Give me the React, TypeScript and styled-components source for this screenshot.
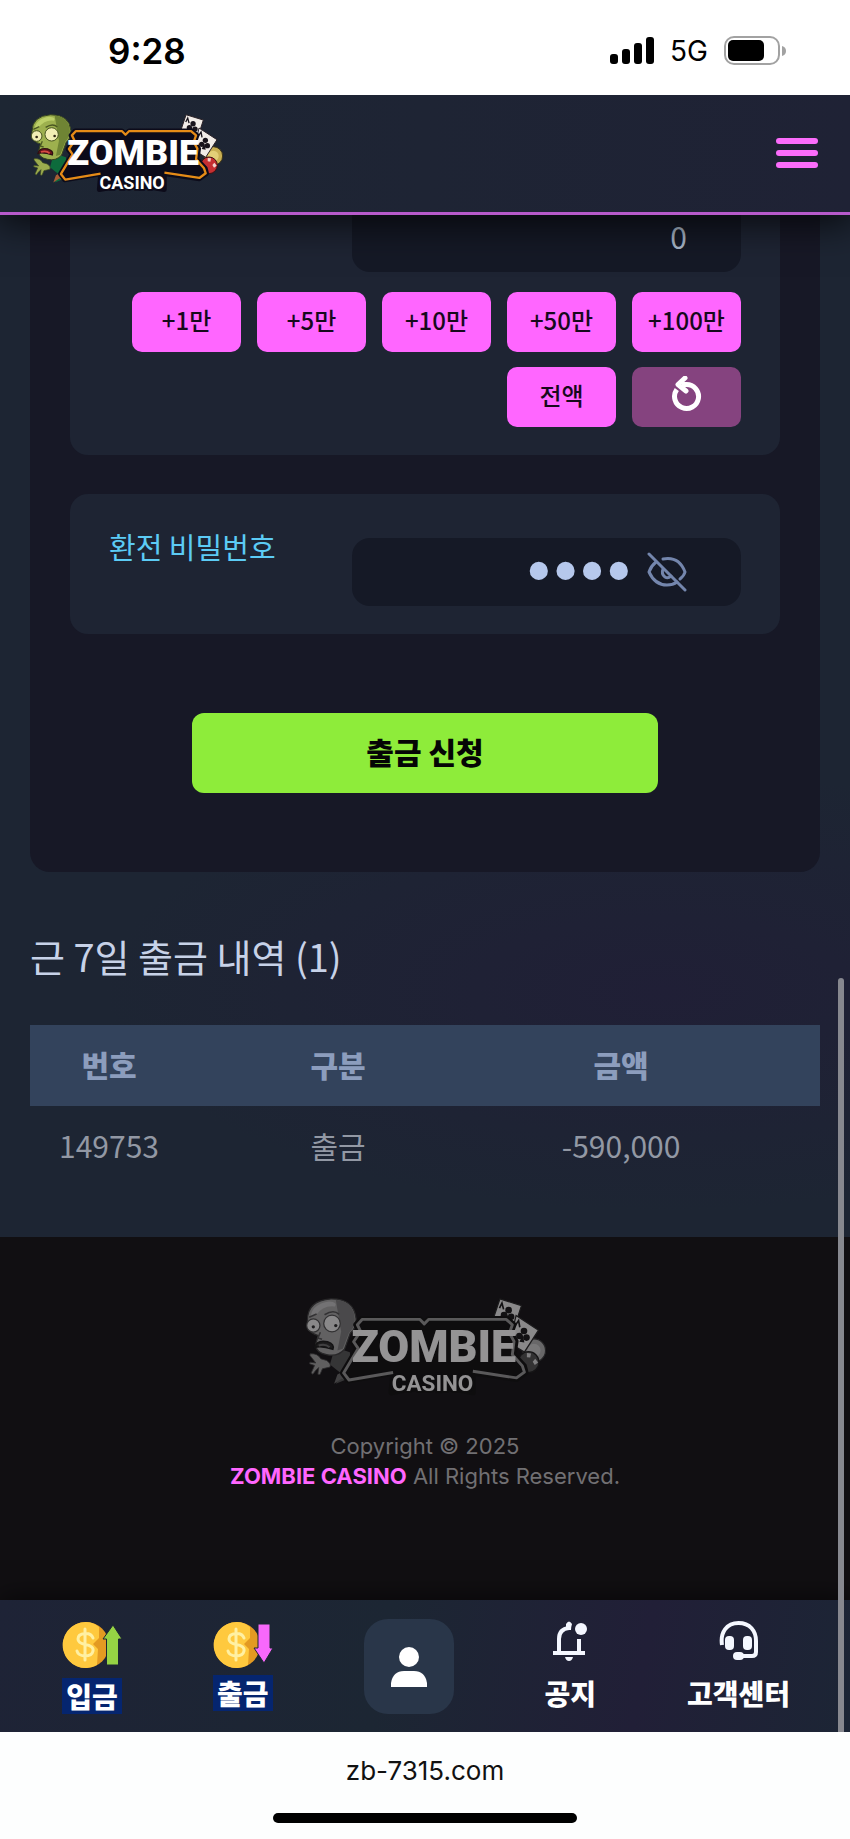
import React, { useState } from "react";
import styled, { createGlobalStyle, css } from "styled-components";

const GlobalStyle = createGlobalStyle`
  *, *::before, *::after { box-sizing: border-box; }
  body {
    margin: 0;
    background: #fdfefe;
    font-family: "Noto Sans CJK KR", sans-serif;
  }
  button, input { font-family: inherit; }
`;

const Page = styled.div`
  position: relative;
  display: flex;
  flex-direction: column;
  min-height: 100vh;
`;

const StatusBar = styled.div`
  position: relative;
  z-index: 2;
  display: flex;
  align-items: center;
  justify-content: space-between;
  height: 95px;
  padding: 6px 64px 0 108px;
  background: #ffffff;
  color: #000000;
  font-family: Inter, sans-serif;
`;

const Clock = styled.time`
  font-size: 35px;
  line-height: 40px;
  font-weight: 600;
`;

const StatusIcons = styled.div`
  display: flex;
  align-items: center;
  gap: 16px;
  font-size: 28px;
  line-height: 32px;
`;

const Header = styled.header`
  position: relative;
  z-index: 1;
  display: flex;
  align-items: center;
  justify-content: space-between;
  height: 120px;
  padding: 0 32px 0 30px;
  background: linear-gradient(90deg, #1d2633, #1f2235);
  border-bottom: 3px solid #b75acb;
  box-shadow: 0 4px 36px 4px rgba(0, 0, 0, 0.75);
`;

const LogoLink = styled.a`
  display: flex;
`;

const MenuButton = styled.button`
  display: flex;
  flex-direction: column;
  gap: 6px;
  width: 42px;
  padding: 0 0 2px;
  border: 0;
  background: none;
`;

const MenuBar = styled.span`
  height: 6px;
  border-radius: 3px;
  background: #fb6cfb;
`;

const Main = styled.main`
  padding: 0 30px 49px;
  background: radial-gradient(ellipse 560px 220px at 78% 76%, #201f36, rgba(32, 31, 54, 0)), #1d2533;
`;

const Panel = styled.form`
  padding: 0 40px 79px;
  border-radius: 0 0 20px 20px;
  background: #171826;
`;

const Card = styled.section<{ $cut?: boolean }>`
  padding: 44px 39px 28px;
  border-radius: 18px;
  background: #1e2433;
  ${(p) =>
    p.$cut &&
    css`
      margin-bottom: 39px;
      padding-top: 0;
      border-radius: 0 0 18px 18px;
    `}
`;

const Row = styled.div`
  display: flex;
  justify-content: flex-end;
`;

const FieldLabel = styled.label`
  flex: 1;
  margin-top: -12px;
  color: #5ccbf5;
  font-size: 29px;
  line-height: 40px;
`;

const Field = styled.div`
  display: flex;
  align-items: center;
  width: 389px;
  height: 68px;
  padding-right: 54px;
  border-radius: 18px;
  background: #151926;
`;

const AmountInput = styled.input`
  width: 389px;
  min-width: 0;
  height: 57px;
  padding: 0 54px 16px 20px;
  border: 0;
  border-radius: 0 0 18px 18px;
  background: #151926;
  color: #a9b7c9;
  font-size: 30px;
  text-align: right;
`;

const SecretInput = styled.input`
  flex: 1;
  width: 100%;
  min-width: 0;
  height: 68px;
  padding: 0 15px 4px;
  border: 0;
  background: none;
  color: #b6c8ec;
  font-family: "Liberation Serif", serif;
  font-size: 76px;
  text-align: right;
`;

const RevealButton = styled.button`
  display: flex;
  padding: 0;
  border: 0;
  background: none;
`;

const Amounts = styled.div`
  display: flex;
  flex-wrap: wrap;
  justify-content: flex-end;
  gap: 15px 16px;
  margin-top: 20px;
`;

const AmountButton = styled.button<{ $reset?: boolean }>`
  display: flex;
  align-items: center;
  justify-content: center;
  width: 109px;
  height: 60px;
  padding: 0 0 6px;
  border: 0;
  border-radius: 10px;
  background: ${(p) => (p.$reset ? "#85437f" : "#ff66ff")};
  color: #17091c;
  font-size: 24px;
  font-weight: 500;
  white-space: nowrap;
`;

const Submit = styled.button`
  display: block;
  width: 65.5%;
  height: 80px;
  margin: 79px auto 0;
  padding: 0 0 4px;
  border: 0;
  border-radius: 12px;
  background: #8eec3a;
  color: #050505;
  font-size: 30px;
  font-weight: 900;
`;

const HistoryTitle = styled.h2`
  margin: 59px 0 44px;
  color: #c7d2e8;
  font-size: 38px;
  line-height: 50px;
  font-weight: 400;
`;

const HistoryTable = styled.table`
  width: 100%;
  table-layout: fixed;
  border-collapse: collapse;
  text-align: center;
  font-size: 30px;

  th {
    height: 81px;
    padding: 0 0 4px;
    background: #33435c;
    color: #8c9dbd;
    font-weight: 900;
  }
  td {
    height: 82px;
    padding: 0 0 4px;
    color: #9298a4;
  }
  th:last-child,
  td:last-child {
    padding-right: 66px;
  }
`;

const Column = styled.col<{ $width?: string }>`
  width: ${(p) => p.$width ?? "auto"};
`;

const Footer = styled.footer`
  display: flex;
  flex-direction: column;
  align-items: center;
  padding: 61px 30px 109px;
  background: #110f12;
`;

const FooterLogo = styled.div`
  display: flex;
  margin-bottom: 33px;
  filter: grayscale(1);
  opacity: 0.55;
`;

const Copyright = styled.p`
  margin: 0;
  color: #717073;
  font-family: Inter, sans-serif;
  font-size: 22px;
  line-height: 30px;
  text-align: center;

  strong {
    color: #ff66ff;
    font-weight: 700;
  }
`;

const BottomNav = styled.nav`
  display: flex;
  align-items: flex-start;
  justify-content: space-between;
  height: 132px;
  padding: 19px 60px 0 62px;
  background: linear-gradient(100deg, #1e2336, #1c2633 45%, #211f37 75%, #1c2535);
  box-shadow: 0 -4px 24px rgba(0, 0, 0, 0.5);
`;

const NavLink = styled.a`
  display: flex;
  flex-direction: column;
  align-items: center;
  gap: 8px;
  color: #ffffff;
  font-size: 28px;
  line-height: 36px;
  font-weight: 900;
  text-decoration: none;
`;

const NavIcon = styled.span<{ $tall?: boolean }>`
  height: ${(p) => (p.$tall ? 51 : 48)}px;
  padding-top: 2px;
`;

const NavLabel = styled.span<{ $selected?: boolean }>`
  height: 36px;
  padding: 0 ${(p) => (p.$selected ? 4 : 0)}px;
  background: ${(p) => (p.$selected ? "#05256f" : "none")};
`;

const ProfileLink = styled.a`
  display: flex;
  align-items: center;
  justify-content: center;
  width: 90px;
  height: 95px;
  border-radius: 24px;
  background: #293649;
`;

const BrowserBar = styled.div`
  position: relative;
  display: flex;
  flex-direction: column;
  align-items: center;
  justify-content: space-between;
  height: 107px;
  padding: 20px 0 16px;
  background: #fdfefe;
  color: #111111;
  font-family: Inter, sans-serif;
  font-size: 26px;
  line-height: 38px;
`;

const HomeIndicator = styled.div`
  width: 304px;
  height: 10px;
  border-radius: 5px;
  background: #000000;
`;

const ScrollThumb = styled.div`
  position: absolute;
  z-index: 2;
  top: 978px;
  right: 6px;
  bottom: 107px;
  width: 6px;
  border-radius: 3px 3px 0 0;
  background: #87888f;
`;

const Svg = styled.svg`
  display: block;
`;

const Club = ({ x, y }: { x: number; y: number }) => (
  <g fill="#17131b">
    <circle cx={x + 3} cy={y - 9} r="8" />
    <circle cx={x - 8} cy={y + 3} r="8" />
    <circle cx={x + 9} cy={y + 7} r="8" />
    <path d={`M${x} ${y}L${x - 8} ${y + 17}L${x + 4} ${y + 19}Z`} />
  </g>
);

const Logo = ({ width, height }: { width: number; height: number }) => (
  <Svg width={width} height={height} viewBox="58 42 580 240" role="img" aria-label="ZOMBIE CASINO">
    {/* cards and chips */}
    <circle cx="609" cy="168" r="28" fill="#c9b053" stroke="#3d3318" strokeWidth="3" />
    <circle cx="609" cy="168" r="16" fill="#e3cf77" />
    <path d="M527 44 L579 60 L562 112 L511 92Z" fill="#f1ece8" stroke="#2b2227" strokeWidth="3" />
    <path d="M526 66l6-12 4 15" stroke="#17131b" strokeWidth="4" fill="none" />
    <Club x={545} y={80} />
    <path d="M566 84 L620 119 L586 172 L550 150Z" fill="#f1ece8" stroke="#2b2227" strokeWidth="3" />
    <path d="M564 108l8-12 3 16" stroke="#17131b" strokeWidth="4" fill="none" />
    <Club x={582} y={130} />
    <circle cx="596" cy="196" r="25" fill="#c62f31" stroke="#3b1013" strokeWidth="3" />
    <path d="M592 174l10 1-2 10-8-1ZM612 188l7 9-8 6-5-8Z" fill="#f0d5cf" />
    {/* zombie body and hand */}
    <path d="M130 160 L166 172 L172 232 L132 248 L146 224 L118 202Z" fill="#0d6b3c" />
    <path d="M128 248l8-22 18-10 8 24-16-4Z" fill="#a75e35" />
    <path d="M70 176q18-2 26 12l14 4q12 8 8 16l-18 4-6 14-5-1 2-16-8 8-6 8-4-3 8-18-12-4 1-4 14 2-14-18Z" fill="#9cab4e" stroke="#3b4a21" strokeWidth="2" />
    {/* zombie head */}
    <path d="M64 95 Q64 48 120 44 Q176 43 181 92 Q181 116 167 126 L153 165 Q137 184 110 178 Q82 172 84 152 L90 132 Q62 126 64 95Z" fill="#9db04e" stroke="#34421f" strokeWidth="3" />
    <path d="M132 46 Q176 50 178 94 Q176 116 164 125 L149 164 L136 168 L145 122Z" fill="#6f8434" />
    <path d="M72 85 Q76 56 116 50 Q138 52 130 62 Q102 58 84 83Z" fill="#bccf68" />
    <circle cx="78" cy="108" r="16" fill="#f2efb4" stroke="#46531f" strokeWidth="3" />
    <circle cx="123" cy="103" r="20" fill="#f2efb4" stroke="#46531f" strokeWidth="3" />
    <circle cx="78" cy="111" r="4" fill="#332a16" />
    <circle cx="132" cy="108" r="4" fill="#332a16" />
    <path d="M95 124l-6 14 10 3M68 88l18-8M105 82q22-14 35-1" fill="none" stroke="#4a5722" strokeWidth="4" />
    <path d="M82 160 Q86 142 112 147 Q130 153 125 165 Q100 156 82 160Z" fill="#6f151c" stroke="#2f1012" strokeWidth="4" />
    <path d="M91 156q16-5 26 4" fill="none" stroke="#d94c43" strokeWidth="5" />
    {/* plate behind the lettering */}
    <path
      d="M194 92 L334 92 L345 102 L356 92 L544 92 L560 106 L553 126 L565 146 L560 178 L585 205 L589 221 L567 237 L462 221 L462 269 Q364 247 266 269 L270 222 L162 240 L149 222 L184 163 L172 147 L189 122 L181 106Z"
      fill="#0c0b1a"
      stroke="#0c0b1a"
      strokeWidth="14"
      strokeLinejoin="round"
    />
    <path
      d="M270 221 L164 239 L151 222 L186 163 L175 147 L192 122 L184 106 L196 93 L334 93 L345 104 L356 93 L542 93 L557 106 L550 126 L561 146 L557 178 L581 205 L586 220 L567 234 L462 218"
      fill="none"
      stroke="#e58b17"
      strokeWidth="7"
      strokeLinejoin="round"
    />
    <text x="368" y="195" textAnchor="middle" fontFamily="Roboto, sans-serif" fontWeight="900" fontSize="108" fill="#ffffff">
      ZOMBIE
    </text>
    <text x="365" y="266" textAnchor="middle" fontFamily="Roboto, sans-serif" fontWeight="700" fontSize="54" fill="#ffffff" stroke="#0c0b1a" strokeWidth="10" paintOrder="stroke">
      CASINO
    </text>
  </Svg>
);

const SignalIcon = () => (
  <Svg width="44" height="28" viewBox="0 0 44 28" aria-hidden="true">
    <rect x="0" y="17" width="8" height="10" rx="3" />
    <rect x="12" y="12" width="8" height="15" rx="3" />
    <rect x="24" y="6" width="8" height="21" rx="3" />
    <rect x="36" y="0" width="8" height="27" rx="3" />
  </Svg>
);

const BatteryIcon = () => (
  <Svg width="62" height="30" viewBox="0 0 62 30" aria-hidden="true">
    <rect x="1" y="1" width="54" height="27" rx="9" fill="none" stroke="#a2a2a2" strokeWidth="2" />
    <rect x="4" y="4" width="36" height="21" rx="5" />
    <path d="M58 10q4 1 4 5t-4 5Z" fill="#a2a2a2" />
  </Svg>
);

const ResetIcon = () => (
  <Svg width="30" height="36" viewBox="0 0 30 36" fill="none" stroke="#ffffff" strokeWidth="5" aria-hidden="true">
    <path d="M4.800 13.500A12 12 0 1 0 14 8.500H10" />
    <path d="M13 2L6 8.500L14 15" strokeLinejoin="round" strokeLinecap="round" />
  </Svg>
);

const EyeOffIcon = () => (
  <Svg width="40" height="40" viewBox="0 0 40 40" fill="none" stroke="#7486ad" strokeWidth="3" strokeLinecap="round" strokeLinejoin="round" aria-hidden="true">
    <path d="M2 2L38 38" />
    <path d="M9 10Q4 14 2 20Q8 33 20 33Q26 33 30 30" />
    <path d="M16 7Q32 4 38 20Q37 24 33 27" />
    <path d="M16 17Q14 22 18 25Q21 27 24 24" />
  </Svg>
);

const CoinIcon = ({ direction }: { direction: "up" | "down" }) => (
  <Svg width="60" height="49" viewBox="0 0 60 49" aria-hidden="true">
    <circle cx="24" cy="24" r="23" fill="#e39a22" />
    <path d="M24 1A23 23 0 1 0 35 44L36 28L31 23L37 17L37 6Q31 1 24 1Z" fill="#ffc93e" />
    <path d="M31 17Q29 12 23 12.500Q16 13 16 18Q16 22 23 23.500Q32 25 31 30Q30 35 23 35Q16 34.500 15 30M23 8V39" fill="none" stroke="#fff0a3" strokeWidth="3" strokeLinecap="round" />
    {direction === "up" ? (
      <path d="M51 4L60 18H56.500V44H44.500V18H41Z" fill="#96d344" stroke="#1d2633" strokeWidth="1" />
    ) : (
      <path d="M45 3H57V27H60L51 42L41 27H45Z" fill="#f768fb" stroke="#1d2633" strokeWidth="1" />
    )}
  </Svg>
);

const PersonIcon = () => (
  <Svg width="36" height="40" viewBox="0 0 36 40" fill="#ffffff" aria-hidden="true">
    <circle cx="18" cy="10" r="10" />
    <path d="M0 40V36Q2 24 13 24H23Q34 24 36 36V40Z" />
  </Svg>
);

const BellIcon = () => (
  <Svg width="34" height="41" viewBox="0 0 34 41" aria-hidden="true">
    <path d="M0 32H32M6 32V18Q6 8 16 7M26 18V32" fill="none" stroke="#f4f7ff" strokeWidth="4" />
    <path d="M13 9V3Q16 -2 19 3Q18 6 18 9Z" fill="#f4f7ff" />
    <circle cx="28" cy="8" r="6" fill="#f4f7ff" />
    <path d="M12 36H20Q19 40 16 40Q13 40 12 36Z" fill="#f4f7ff" />
  </Svg>
);

const HeadsetIcon = () => (
  <Svg width="39" height="39" viewBox="0 0 39 39" aria-hidden="true">
    <path d="M3 24C1 11 8 2 19.500 2S37 10 37 20V31Q37 35 33 35H20" fill="none" stroke="#f4f7ff" strokeWidth="4" />
    <rect x="6" y="15" width="9" height="14" rx="4" fill="#f4f7ff" />
    <rect x="24" y="15" width="9" height="14" rx="4" fill="#f4f7ff" />
    <rect x="14" y="31" width="11" height="8" rx="4" fill="#f4f7ff" />
  </Svg>
);

const STEPS = [
  { label: "+1만", value: 10000 },
  { label: "+5만", value: 50000 },
  { label: "+10만", value: 100000 },
  { label: "+50만", value: 500000 },
  { label: "+100만", value: 1000000 },
];

const NAV_LEFT = [
  { label: "입금", icon: <CoinIcon direction="up" />, tall: true },
  { label: "출금", icon: <CoinIcon direction="down" />, tall: false },
];

const NAV_RIGHT = [
  { label: "공지", icon: <BellIcon /> },
  { label: "고객센터", icon: <HeadsetIcon /> },
];

export default function App() {
  const [amount, setAmount] = useState(0);
  const [secret, setSecret] = useState("1234");
  const [visible, setVisible] = useState(false);

  return (
    <>
      <GlobalStyle />
      <Page>
        <StatusBar>
          <Clock>9:28</Clock>
          <StatusIcons>
            <SignalIcon />
            <span>5G</span>
            <BatteryIcon />
          </StatusIcons>
        </StatusBar>

        <Header>
          <LogoLink href="#home">
            <Logo width={193} height={80} />
          </LogoLink>
          <MenuButton type="button" aria-label="메뉴">
            <MenuBar />
            <MenuBar />
            <MenuBar />
          </MenuButton>
        </Header>

        <Main>
          <Panel onSubmit={(e) => e.preventDefault()}>
            <Card $cut>
              <Row>
                <AmountInput
                  aria-label="출금 금액"
                  value={amount.toLocaleString("en-US")}
                  onChange={(e) => setAmount(Number(e.target.value.replace(/\D/g, "")))}
                />
              </Row>
              <Amounts>
                {STEPS.map((step) => (
                  <AmountButton key={step.label} type="button" onClick={() => setAmount(amount + step.value)}>
                    {step.label}
                  </AmountButton>
                ))}
                <AmountButton type="button">전액</AmountButton>
                <AmountButton type="button" $reset aria-label="초기화" onClick={() => setAmount(0)}>
                  <ResetIcon />
                </AmountButton>
              </Amounts>
            </Card>

            <Card>
              <Row>
                <FieldLabel htmlFor="secret">환전 비밀번호</FieldLabel>
                <Field>
                  <SecretInput
                    id="secret"
                    type={visible ? "text" : "password"}
                    value={secret}
                    onChange={(e) => setSecret(e.target.value)}
                  />
                  <RevealButton type="button" aria-label="비밀번호 표시" onClick={() => setVisible(!visible)}>
                    <EyeOffIcon />
                  </RevealButton>
                </Field>
              </Row>
            </Card>

            <Submit type="submit">출금 신청</Submit>
          </Panel>

          <HistoryTitle>근 7일 출금 내역 (1)</HistoryTitle>
          <HistoryTable>
            <colgroup>
              <Column $width="20%" />
              <Column $width="38%" />
              <Column />
            </colgroup>
            <thead>
              <tr>
                <th scope="col">번호</th>
                <th scope="col">구분</th>
                <th scope="col">금액</th>
              </tr>
            </thead>
            <tbody>
              <tr>
                <td>149753</td>
                <td>출금</td>
                <td>-590,000</td>
              </tr>
            </tbody>
          </HistoryTable>
        </Main>

        <Footer>
          <FooterLogo>
            <Logo width={241} height={100} />
          </FooterLogo>
          <Copyright>
            Copyright © 2025
            <br />
            <strong>ZOMBIE CASINO</strong> All Rights Reserved.
          </Copyright>
        </Footer>

        <BottomNav>
          {NAV_LEFT.map((item) => (
            <NavLink key={item.label} href={`#${item.label}`}>
              <NavIcon $tall={item.tall}>{item.icon}</NavIcon>
              <NavLabel $selected>{item.label}</NavLabel>
            </NavLink>
          ))}
          <ProfileLink href="#profile" aria-label="내 정보">
            <PersonIcon />
          </ProfileLink>
          {NAV_RIGHT.map((item) => (
            <NavLink key={item.label} href={`#${item.label}`}>
              <NavIcon>{item.icon}</NavIcon>
              <NavLabel>{item.label}</NavLabel>
            </NavLink>
          ))}
        </BottomNav>

        <BrowserBar>
          <span>zb-7315.com</span>
          <HomeIndicator />
        </BrowserBar>
        <ScrollThumb />
      </Page>
    </>
  );
}
